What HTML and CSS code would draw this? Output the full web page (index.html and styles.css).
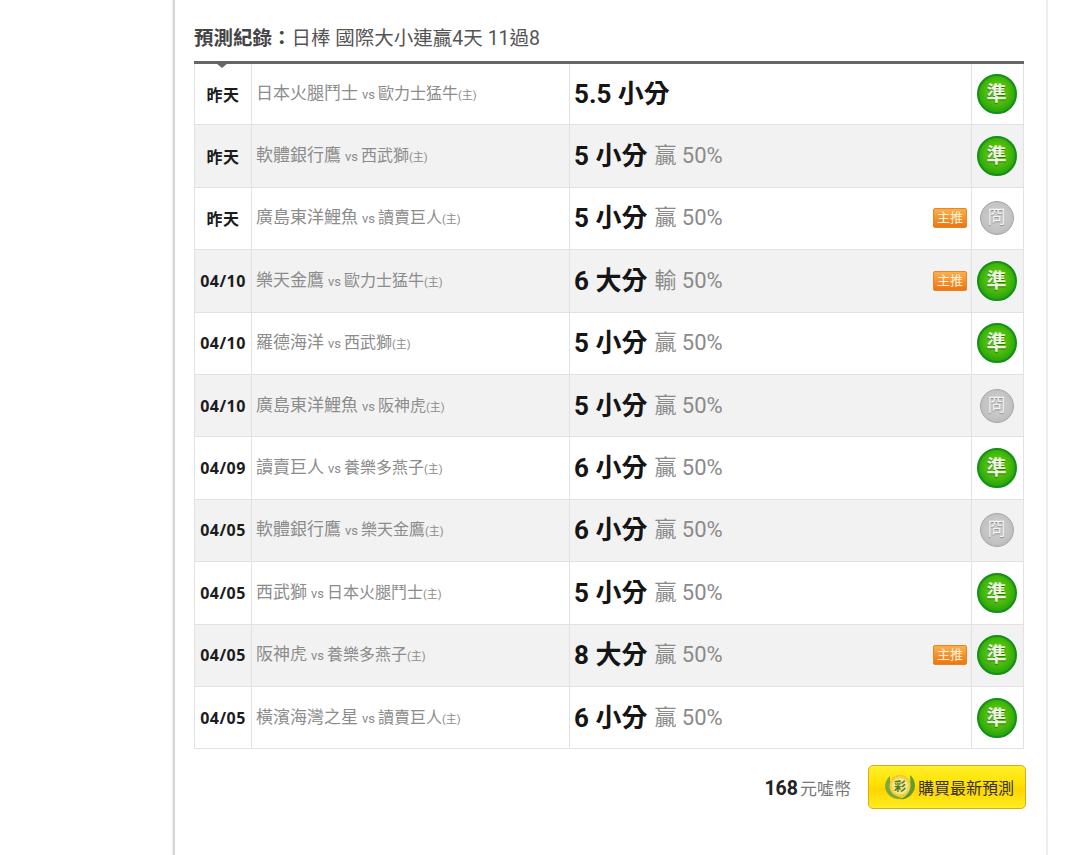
FILE: index.html
```html
<!DOCTYPE html>
<html lang="zh-Hant">
<head>
<meta charset="utf-8">
<title>預測紀錄</title>
<link rel="stylesheet" href="styles.css">
</head>
<body>
<main class="panel">
  <h2 class="title"><b>預測紀錄：</b>日棒 國際大小連贏4天 11過8</h2>
  <div class="table-wrap">
    <span class="caret"></span>
    <table class="records">
      <colgroup><col class="c1"><col class="c2"><col class="c3"><col class="c4"></colgroup>
      <tbody>
        <tr><td class="date">昨天</td><td class="match"><div class="match-in">日本火腿鬥士<i>vs</i><span class="home">歐力士猛牛</span><small>(主)</small></div></td><td class="pick"><div class="pick-in"><b>5.5 小分</b></div></td><td class="res"><span class="medal ok">準</span></td></tr>
        <tr><td class="date">昨天</td><td class="match"><div class="match-in">軟體銀行鷹<i>vs</i><span class="home">西武獅</span><small>(主)</small></div></td><td class="pick"><div class="pick-in"><b>5 小分</b><span>贏 50%</span></div></td><td class="res"><span class="medal ok">準</span></td></tr>
        <tr><td class="date">昨天</td><td class="match"><div class="match-in">廣島東洋鯉魚<i>vs</i><span class="home">讀賣巨人</span><small>(主)</small></div></td><td class="pick"><div class="pick-in"><b>5 小分</b><span>贏 50%</span><em class="tag">主推</em></div></td><td class="res"><span class="medal no">冏</span></td></tr>
        <tr><td class="date">04/10</td><td class="match"><div class="match-in">樂天金鷹<i>vs</i><span class="home">歐力士猛牛</span><small>(主)</small></div></td><td class="pick"><div class="pick-in"><b>6 大分</b><span>輸 50%</span><em class="tag">主推</em></div></td><td class="res"><span class="medal ok">準</span></td></tr>
        <tr><td class="date">04/10</td><td class="match"><div class="match-in">羅德海洋<i>vs</i><span class="home">西武獅</span><small>(主)</small></div></td><td class="pick"><div class="pick-in"><b>5 小分</b><span>贏 50%</span></div></td><td class="res"><span class="medal ok">準</span></td></tr>
        <tr><td class="date">04/10</td><td class="match"><div class="match-in">廣島東洋鯉魚<i>vs</i><span class="home">阪神虎</span><small>(主)</small></div></td><td class="pick"><div class="pick-in"><b>5 小分</b><span>贏 50%</span></div></td><td class="res"><span class="medal no">冏</span></td></tr>
        <tr><td class="date">04/09</td><td class="match"><div class="match-in">讀賣巨人<i>vs</i><span class="home">養樂多燕子</span><small>(主)</small></div></td><td class="pick"><div class="pick-in"><b>6 小分</b><span>贏 50%</span></div></td><td class="res"><span class="medal ok">準</span></td></tr>
        <tr><td class="date">04/05</td><td class="match"><div class="match-in">軟體銀行鷹<i>vs</i><span class="home">樂天金鷹</span><small>(主)</small></div></td><td class="pick"><div class="pick-in"><b>6 小分</b><span>贏 50%</span></div></td><td class="res"><span class="medal no">冏</span></td></tr>
        <tr><td class="date">04/05</td><td class="match"><div class="match-in">西武獅<i>vs</i><span class="home">日本火腿鬥士</span><small>(主)</small></div></td><td class="pick"><div class="pick-in"><b>5 小分</b><span>贏 50%</span></div></td><td class="res"><span class="medal ok">準</span></td></tr>
        <tr><td class="date">04/05</td><td class="match"><div class="match-in">阪神虎<i>vs</i><span class="home">養樂多燕子</span><small>(主)</small></div></td><td class="pick"><div class="pick-in"><b>8 大分</b><span>贏 50%</span><em class="tag">主推</em></div></td><td class="res"><span class="medal ok">準</span></td></tr>
        <tr><td class="date">04/05</td><td class="match"><div class="match-in">橫濱海灣之星<i>vs</i><span class="home">讀賣巨人</span><small>(主)</small></div></td><td class="pick"><div class="pick-in"><b>6 小分</b><span>贏 50%</span></div></td><td class="res"><span class="medal ok">準</span></td></tr>
      </tbody>
    </table>
  </div>
  <div class="buy">
    <p class="price"><b>168</b>元噓幣</p>
    <a class="buy-btn" href="#">
      <svg class="logo" width="34" height="30" viewBox="0 0 34 30" aria-hidden="true">
        <path d="M7 4C1 9 0 18 7 24c4 3 9 4 14 2C13 26 6 19 7 4z" fill="#7fa83a"/>
        <path d="M27 3c6 5 7 14 1 20-3 3-7 5-11 4 7-2 12-9 10-24z" fill="#5f9a34"/>
        <circle cx="17" cy="14" r="10.5" fill="#f3d24a" stroke="#d9a92c" stroke-dasharray="1.5 1.5"/>
        <circle cx="17" cy="14" r="8" fill="#f8e88a"/>
        <text x="17" y="18.5" text-anchor="middle" class="logo-t">彩</text>
      </svg>
      <span>購買最新預測</span>
    </a>
  </div>
</main>
</body>
</html>
```

FILE: styles.css
```css
html, body { margin: 0; padding: 0; background: #fff; }
body {
  font-family: Roboto, "Noto Sans CJK TC", "Noto Sans", sans-serif;
  height: 855px;
  overflow: hidden;
}
.panel {
  box-sizing: border-box;
  width: 875px;
  height: 855px;
  margin-left: 173px;
  padding: 0 23px 0 19px;
  border-left: 2px solid #d6d6d6;
  border-right: 2px solid #eeeeee;
  box-shadow: -1px 0 1px #eee;
}
.title {
  margin: 0;
  padding-top: 25px;
  height: 36px;
  font-size: 19.5px;
  line-height: 28px;
  font-weight: 400;
  color: #555;
  white-space: nowrap;
}
.title b { font-weight: 700; color: #444; }
.table-wrap { position: relative; }
.caret {
  position: absolute;
  left: 22px;
  top: 2px;
  width: 0;
  height: 0;
  border-left: 6px solid transparent;
  border-right: 6px solid transparent;
  border-top: 5px solid #666;
}
.records {
  width: 829px;
  table-layout: fixed;
  border-collapse: collapse;
  border-top: 3px solid #666;
}
.c1 { width: 57px; }
.c2 { width: 318px; }
.c3 { width: 402px; }
.c4 { width: 52px; }
.records td {
  height: 62.4px;
  padding: 0;
  border: 1px solid #e2e2e2;
  box-sizing: border-box;
  vertical-align: middle;
}
.records tr:nth-child(even) td { background: #f2f2f2; }
.date {
  text-align: center;
  font-family: "Noto Sans", "Noto Sans CJK TC", sans-serif;
  font-size: 16px;
  font-weight: 700;
  letter-spacing: 0.5px;
  color: #1c1c1c;
}
.match-in {
  display: flex;
  align-items: baseline;
  padding: 1px 0 0 4px;
  font-size: 17px;
  line-height: 24px;
  color: #8c8c8c;
  white-space: nowrap;
}
.match i { font-style: normal; font-size: 13px; margin: 0 3px 0 4px; }
.home { font-size: 16px; }
.match small { font-size: 11px; }
.pick-in {
  display: flex;
  align-items: center;
  padding: 0 4px 0 4px;
}
.pick b {
  font-size: 26px;
  font-weight: 700;
  color: #151515;
  line-height: 30px;
}
.pick span {
  margin-left: 7px;
  font-size: 22px;
  color: #8a8a8a;
  line-height: 30px;
}
.tag {
  margin-left: auto;
  width: 34px;
  height: 20px;
  box-sizing: border-box;
  border-radius: 2px;
  border: 1px solid #e5862a;
  background: linear-gradient(#fbb04a, #ec7612);
  color: #fff1dc;
  font-style: normal;
  font-size: 13px;
  line-height: 18px;
  text-align: center;
  white-space: nowrap;
}
.res { text-align: center; padding-right: 2px !important; }
.medal {
  display: block;
  margin: 0 auto;
  border-radius: 50%;
  text-align: center;
  font-weight: 700;
  box-sizing: border-box;
}
.medal.ok {
  width: 40px;
  height: 40px;
  font-size: 20px;
  line-height: 37px;
  color: #e8f5dc;
  background: radial-gradient(circle at 50% 45%, #6fd80f 0, #45b80a 50%, #1d9a12 85%);
  border: 2px solid #149014;
  text-shadow: 0 1px 1px #2d6b10;
}
.medal.no {
  width: 34px;
  height: 34px;
  font-size: 18px;
  line-height: 30px;
  font-weight: 400;
  color: #f4f4f4;
  background: radial-gradient(circle at 50% 45%, #d4d4d4 0, #c2c2c2 60%, #b0b0b0 100%);
  border: 1.5px solid #a8a8a8;
  text-shadow: 0 1px 1px #8c8c8c;
}
.buy {
  display: flex;
  justify-content: flex-end;
  align-items: center;
  gap: 17px;
  margin-right: -3px;
  padding-top: 16px;
}
.price {
  margin: 0;
  font-size: 17px;
  color: #777;
  white-space: nowrap;
}
.price b { font-size: 19.5px; font-weight: 700; color: #222; margin-right: 2px; }
.buy-btn {
  display: flex;
  align-items: center;
  box-sizing: border-box;
  width: 158px;
  height: 44px;
  padding-left: 14px;
  border: 1px solid #d9ae14;
  border-radius: 5px;
  background: linear-gradient(#fff02a 0, #ffe000 45%, #ffd400 55%, #ffee20 100%);
  color: #333;
  font-size: 16px;
  text-decoration: none;
  white-space: nowrap;
}
.logo { flex: none; margin-right: 1px; }
.logo-t { font-size: 12px; fill: #4f7d22; font-weight: 700; }
```
